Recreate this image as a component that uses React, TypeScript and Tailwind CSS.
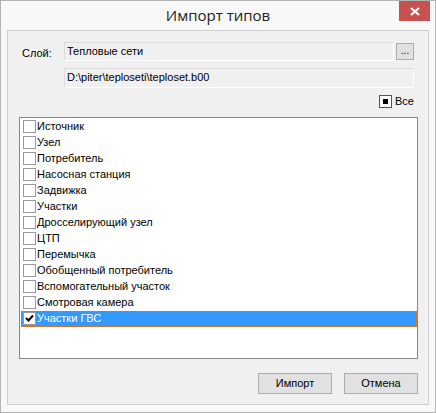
import React from "react";

const items = [
  "Источник",
  "Узел",
  "Потребитель",
  "Насосная станция",
  "Задвижка",
  "Участки",
  "Дросселирующий узел",
  "ЦТП",
  "Перемычка",
  "Обобщенный потребитель",
  "Вспомогательный участок",
  "Смотровая камера",
  "Участки ГВС",
];

const font = { fontFamily: '"Liberation Sans", Arial, sans-serif' };

function Box({ checked }: { checked: boolean }) {
  return (
    <span className="w-[13px] h-[13px] shrink-0 border border-[#9a9a9a] bg-white flex items-center justify-center">
      {checked && (
        <svg width="9" height="9" viewBox="0 0 9 9">
          <path d="M1 4 L3.5 6.5 L8 1.5" stroke="#000" strokeWidth="2" fill="none" />
        </svg>
      )}
    </span>
  );
}

export default function App() {
  return (
    <div
      className="w-[436px] h-[413px] border border-[#b4b4b4] bg-[#f8f8f8] flex flex-col text-[11px] text-black"
      style={font}
    >
      <div className="h-[29px] relative flex items-center justify-center shrink-0">
        <span
          className="text-[15px] text-[#222]"
          style={{ fontFamily: '"Open Sans", "Noto Sans", sans-serif' }}
        >
          Импорт типов
        </span>
        <div className="absolute right-[5px] top-0 w-[31px] h-[20px] bg-[#c75050] flex items-center justify-center">
          <svg width="10" height="9" viewBox="0 0 10 9">
            <path d="M1 1 L9 8 M9 1 L1 8" stroke="#fff" strokeWidth="2.2" fill="none" />
          </svg>
        </div>
      </div>

      <div className="mx-[6px] h-[375px] border border-[#cfcfcf] bg-[#f0f0f0] flex flex-col pl-[11px] pr-[10px]">
        <div className="flex items-start mt-[11px]">
          <span className="w-[45px] pl-[3px] pt-[3px]">Слой:</span>
          <div className="w-[330px] h-[19px] border border-[#dcdcdc] border-b-white border-r-white pl-[2px] leading-[16px]">
            Тепловые сети
          </div>
          <div className="ml-[2px] mt-[1px] w-[18px] h-[17px] border border-[#adadad] bg-[#e1e1e1] flex items-center justify-center text-[10px] leading-none pb-[2px]">
            ...
          </div>
        </div>

        <div className="flex mt-[6px]">
          <div className="ml-[45px] w-[350px] h-[20px] border border-[#dcdcdc] border-b-white border-r-white pl-[2px] leading-[17px]">
            D:\piter\teploseti\teploset.b00
          </div>
        </div>

        <div className="flex justify-end items-center mt-[8px] pr-[4px] h-[12px]">
          <span className="w-[13px] h-[13px] border border-[#555] bg-white flex items-center justify-center">
            <span className="w-[5px] h-[5px] bg-black" />
          </span>
          <span className="ml-[3px]">Все</span>
        </div>

        <div className="mt-[9px] w-[399px] h-[242px] border border-[#828790] bg-white pt-px pl-px">
          {items.map((t, i) => {
            const sel = i === items.length - 1;
            return (
              <div
                key={t}
                className={
                  sel
                    ? "h-[16px] w-[396px] flex items-center bg-[#3399ff] text-white border border-dotted border-[#cc7a33] pl-px"
                    : "h-[16px] w-[396px] flex items-center pl-[2px]"
                }
              >
                <Box checked={sel} />
                <span className="ml-px leading-none">{t}</span>
              </div>
            );
          })}
        </div>

        <div className="flex justify-end mt-[14px] gap-[12px]">
          <div className="w-[74px] h-[21px] border border-[#adadad] bg-[#e1e1e1] flex items-center justify-center">
            Импорт
          </div>
          <div className="w-[74px] h-[21px] border border-[#adadad] bg-[#e1e1e1] flex items-center justify-center">
            Отмена
          </div>
        </div>
      </div>
    </div>
  );
}
